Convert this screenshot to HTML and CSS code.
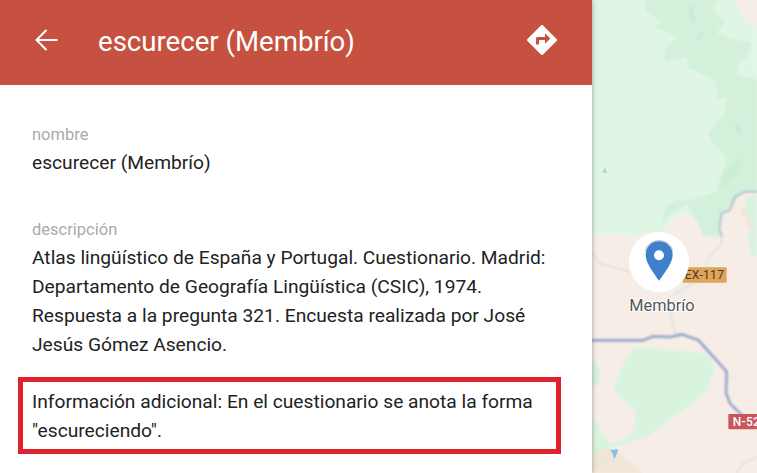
FILE: index.html
```html
<!DOCTYPE html>
<html lang="es">
<head>
<meta charset="utf-8">
<title>escurecer (Membrío)</title>
<link rel="stylesheet" href="styles.css">
</head>
<body>
<div class="app">
  <section class="panel">
    <header class="bar">
      <svg class="back" viewBox="0 0 24 24" width="24" height="24" aria-hidden="true"><path d="M22.5 12H1.5M11.5 2 1.5 12 11.5 22"/></svg>
      <h1 class="title">escurecer (Membrío)</h1>
      <svg class="dir" viewBox="0 0 24 24" width="36" height="36" aria-hidden="true"><path d="M21.71 11.29l-9-9c-.39-.39-1.02-.39-1.41 0l-9 9c-.39.39-.39 1.02 0 1.41l9 9c.39.39 1.02.39 1.41 0l9-9c.39-.38.39-1.01 0-1.41zM14 14.5V12h-4v3H8v-4c0-.55.45-1 1-1h5V7.5l3.5 3.5-3.5 3.5z"/></svg>
    </header>
    <div class="body">
      <div class="field">
        <div class="label">nombre</div>
        <div class="value">escurecer (Membrío)</div>
      </div>
      <div class="field">
        <div class="label">descripción</div>
        <div class="value">Atlas lingüístico de España y Portugal. Cuestionario. Madrid: Departamento de Geografía Lingüística (CSIC), 1974. Respuesta a la pregunta 321. Encuesta realizada por José Jesús Gómez Asencio.</div>
      </div>
      <div class="note">Información adicional: En el cuestionario se anota la forma "escureciendo".</div>
    </div>
  </section>
  <div class="map">
    <svg class="map-svg" viewBox="6 0 495 1419" preserveAspectRatio="none" aria-hidden="true">
      <defs>
        <filter id="soft" x="-5%" y="-5%" width="110%" height="110%"><feGaussianBlur stdDeviation="2.5"/></filter>
      </defs>
      <rect x="0" y="0" width="501" height="1419" fill="#f6eee6"/>
      <g filter="url(#soft)">
        <path fill="#e0f6e5" d="M0 0H440L445 20 460 60 501 75V560L470 570 435 590 420 625 395 640 385 680 390 708H340L325 670 290 640 250 650 225 690 205 700 150 702 140 708 50 700 20 708H0Z"/>
        <path fill="#d2f0da" d="M170 0 165 30 215 65 190 80 265 110 225 145 225 185 290 170 295 205 320 215 375 240 385 300 410 290 405 340 355 400 370 430 405 465 410 490 395 520 380 575 300 600 260 600 225 620 215 680 232 650 290 610 330 680 340 708 395 708 385 680 395 640 420 625 445 585 465 570 501 575V240L440 225 445 190 470 170 485 130 420 115 380 100 405 65 365 25 390 0Z"/>
        <path fill="#d8f3df" d="M470 592 501 585V772L482 762 472 700 490 690 465 625Z"/>
        <path fill="#c6ebd0" d="M400 520 450 475 455 490 410 560 390 565Z" opacity=".6"/>
        <path fill="#f3e6d8" d="M450 630 465 621 490 680 480 695Z"/>
        <path fill="#d5f2dc" d="M6 1075 30 1110 25 1150 6 1160Z"/>
        <path fill="#f0e6d6" d="M6 1345 35 1320 100 1370 160 1419H6Z"/>
        <path fill="#d8f4df" d="M130 1040 350 1060 375 1105 345 1180 280 1230 170 1310 60 1345 20 1350 6 1380V1250L60 1330 100 1320 135 1285 135 1230 100 1200 70 1170 90 1110Z"/>
      </g>
      <g fill="none" stroke-linecap="round" stroke-linejoin="round" filter="url(#soft)">
        <path stroke="#d4dde8" stroke-width="4" d="M6 760 30 790 120 815M395 708V730L350 780 345 830 250 885M240 930 255 1000M501 1370 460 1390 440 1419"/>
        <path stroke="#a8b6d0" stroke-width="5" d="M501 575H465L435 590 420 630 395 640 388 685 395 708"/>
        <path stroke="#95a6c9" stroke-width="8" d="M6 1021H160L190 1009 240 1011 275 1003 325 1020 410 1115 408 1180 420 1210 460 1250"/>
        <path stroke="#a9d7ee" stroke-width="3" d="M300 20 310 65M325 112 338 100M440 370 448 400"/>
        <path stroke="#bfe3ef" stroke-width="2" d="M415 1132H445"/>
      </g>
      <path fill="#a9cfe0" d="M38 518 44 502 52 518Z"/>
      <path fill="#7fc4e8" d="M60 1350 85 1348 78 1368 72 1378 68 1360Z"/>
      <rect x="278" y="802" width="132" height="46" rx="3" fill="#dfa35b"/>
      <text class="shield-text" x="284" y="838">EX-117</text>
      <rect x="415" y="1242" width="90" height="46" rx="3" fill="#c9565b"/>
      <text class="shield-text shield-red" x="428" y="1278">N-52</text>
      <circle cx="207" cy="786" r="90" fill="#fff"/>
      <path fill="none" stroke="#999" stroke-width="2" d="M166 752C176 712 238 712 248 752"/>
      <path fill="#3f7fcc" d="M207 724C183 724 167 742 167 764 167 790 192 820 207 842 222 820 248 790 248 764 248 742 231 724 207 724Z"/>
      <circle cx="207" cy="766" r="15" fill="#fff"/>
      <text class="place" x="216" y="932">Membrío</text>
    </svg>
  </div>
</div>
</body>
</html>
```
FILE: styles.css
```css
* { box-sizing: border-box; }
html, body { margin: 0; height: 100%; overflow: hidden; background: #fff; }
body { font-family: Roboto, "Liberation Sans", sans-serif; }
.app { display: flex; width: 757px; height: 473px; }
.panel { width: 592px; flex: none; background: #fff; position: relative; z-index: 1; box-shadow: 1px 0 4px rgba(0,0,0,.25); }
.bar { height: 85px; background: #c75140; color: #fff; display: flex; align-items: center; padding: 0 32px 5px 35px; }
.back { fill: none; stroke: #fff; stroke-width: 2; }
.title { margin: 2px 0 0 39px; font-size: 27.6px; font-weight: 400; flex: 1; }
.dir { fill: #fff; }
.body { padding: 38px 32px 0; color: #222; }
.field + .field { margin-top: 41px; }
.label { font-size: 16.5px; line-height: 23px; margin-bottom: 2px; color: #aaa; }
.value { font-size: 19.2px; line-height: 29px; max-width: 525px; }
.note { margin: 18px -14px 0; width: 543px; border: 5px solid #e0202c; padding: 5px 9px 4px; font-size: 19.2px; line-height: 29px; }
.map { flex: 1; min-width: 0; }
.map-svg { display: block; width: 165px; height: 473px; }
.shield-text { font-family: Roboto, sans-serif; font-size: 36px; fill: #4a3a22; letter-spacing: 1px; }
.shield-red { fill: #fff; font-weight: 500; }
.place { font-family: Roboto, sans-serif; font-size: 49px; fill: #555; text-anchor: middle; stroke: #fff; stroke-width: 6px; paint-order: stroke; }
```
